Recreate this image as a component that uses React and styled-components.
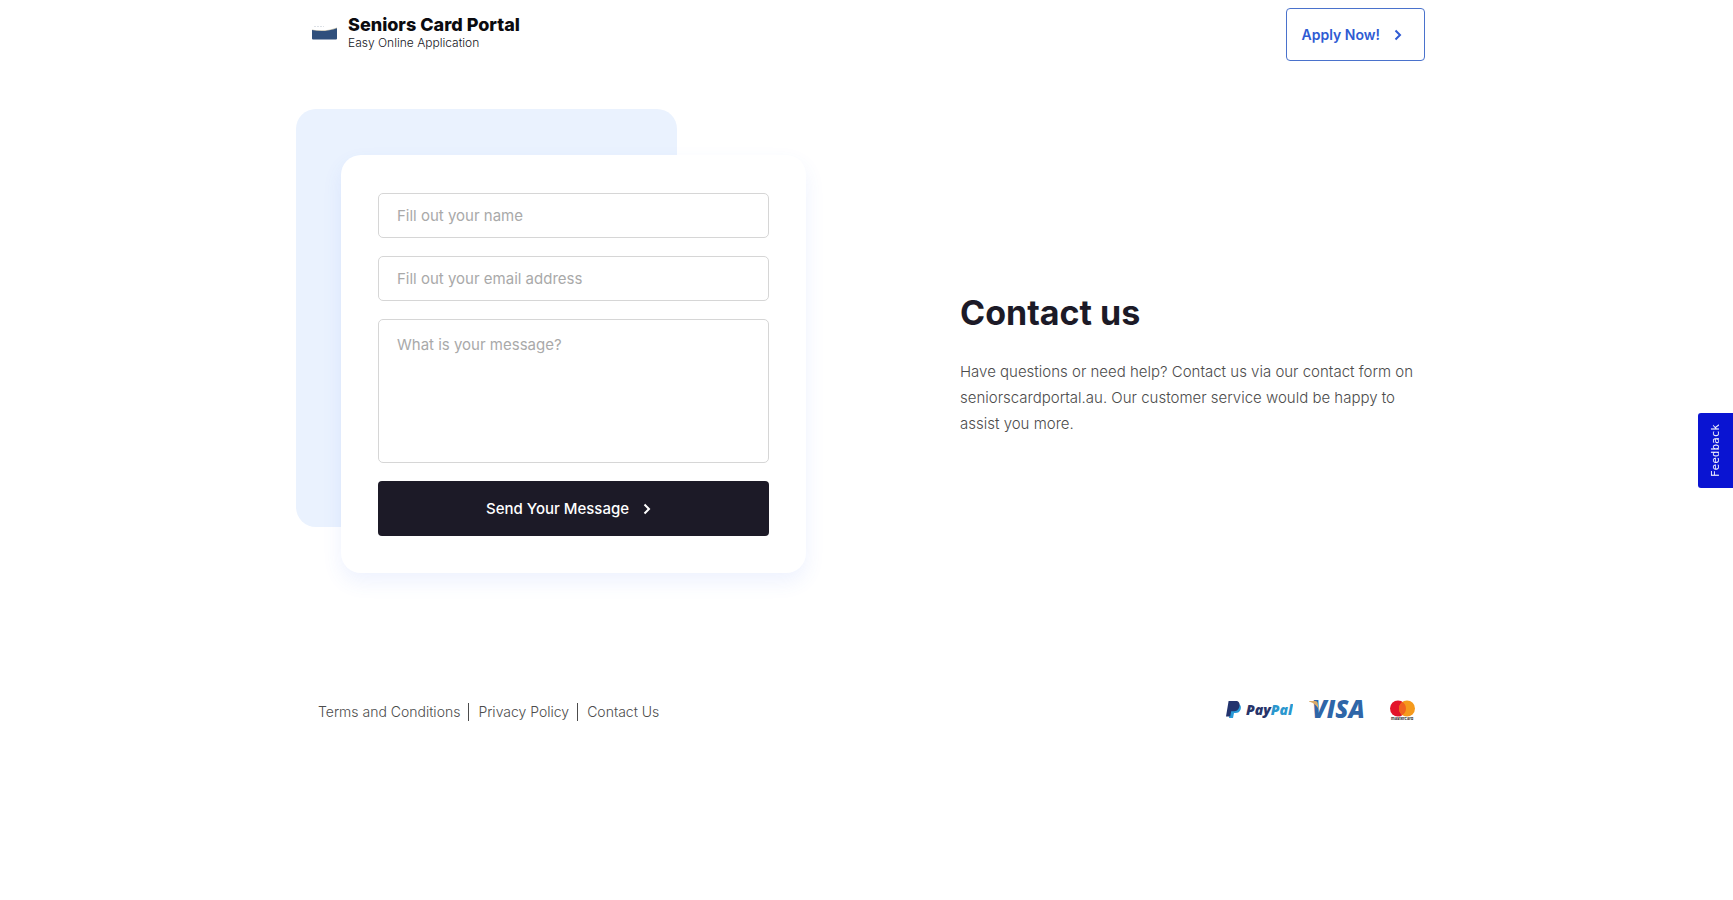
import React, { useState } from "react";
import styled, { createGlobalStyle } from "styled-components";

const App = () => {
  const [form, setForm] = useState({ name: "", email: "", message: "" });

  const handleChange = (e) => {
    setForm({ ...form, [e.target.name]: e.target.value });
  };

  return (
    <>
      <GlobalStyle />
      <Header>
        <Brand href="#home">
          <CardLogo />
          <div>
            <BrandName>Seniors Card Portal</BrandName>
            <BrandTagline>Easy Online Application</BrandTagline>
          </div>
        </Brand>
        <ApplyLink href="#apply">
          Apply Now!
          <Chevron />
        </ApplyLink>
      </Header>

      <Main>
        <FormArea>
          <FormCard onSubmit={(e) => e.preventDefault()}>
            <Input
              type="text"
              name="name"
              aria-label="Name"
              placeholder="Fill out your name"
              value={form.name}
              onChange={handleChange}
            />
            <Input
              type="email"
              name="email"
              aria-label="Email address"
              placeholder="Fill out your email address"
              value={form.email}
              onChange={handleChange}
            />
            <Message
              name="message"
              aria-label="Message"
              placeholder="What is your message?"
              value={form.message}
              onChange={handleChange}
            />
            <SubmitButton type="submit">
              Send Your Message
              <Chevron />
            </SubmitButton>
          </FormCard>
        </FormArea>
        <Intro>
          <h1>Contact us</h1>
          <p>
            Have questions or need help? Contact us via our contact form on
            seniorscardportal.au. Our customer service would be happy to assist
            you more.
          </p>
        </Intro>
      </Main>

      <Footer>
        <FooterNav>
          <a href="#terms">Terms and Conditions</a>
          <a href="#privacy">Privacy Policy</a>
          <a href="#contact">Contact Us</a>
        </FooterNav>
        <Payments>
          <PayPal />
          <Visa />
          <Mastercard />
        </Payments>
      </Footer>

      <FeedbackButton type="button">Feedback</FeedbackButton>
    </>
  );
};

const CardLogo = () => (
  <svg width="25" height="15" viewBox="0 0 25 15" aria-hidden="true">
    <path d="M2 1.5h10" stroke="#dde1e6" strokeWidth="1" strokeDasharray="2 1" />
    <path d="M0 4.4C8 6.2 17 5.4 25 2.4V4C17 6.6 8 7 0 5.4z" fill="#c5c1ae" />
    <path
      d="M0 5C8 6.8 17 6.2 25 3.2V13.5Q25 14.5 24 14.5H1Q0 14.5 0 13.5z"
      fill="#2f4f7c"
    />
  </svg>
);

const Chevron = () => (
  <svg width="8" height="12" viewBox="0 0 8 12" fill="none" aria-hidden="true">
    <path d="M1.5 1.5L6 6l-4.500 4.500" stroke="currentColor" strokeWidth="2" />
  </svg>
);

const PayPal = () => (
  <svg width="67" height="22" viewBox="0 0 67 22" role="img" aria-label="PayPal">
    <path
      d="M5.500 5H11.500C14.500 5 15.500 7.500 14.600 10.500C13.800 13 12 14 9.500 14H8L7 19H3z"
      fill="#2a9bd8"
    />
    <path
      d="M2.600 2H9.500C12.800 2 14.200 4 13.400 7.500C12.600 11 10.500 12.200 7.500 12.200H5.200L4.200 17.500H0z"
      fill="#23346e"
    />
    <text x="20" y="16" fontFamily="Open Sans, sans-serif" fontSize="14" fontWeight="800" fontStyle="italic">
      <tspan fill="#27346a">Pay</tspan>
      <tspan fill="#2a97ce">Pal</tspan>
    </text>
  </svg>
);

const Visa = () => (
  <svg width="60" height="36" viewBox="0 -7 60 36" role="img" aria-label="VISA">
    <text
      x="3"
      y="19"
      fontFamily="Open Sans, sans-serif"
      fontSize="24"
      fontWeight="800"
      fontStyle="italic"
      fill="#2f66a8"
    >
      VISA
    </text>
    <path d="M0 2H6.500Q8 2 8.500 3.500L10 11Q7 4.500 0 2.600z" fill="#d9ab68" />
  </svg>
);

const Mastercard = () => (
  <svg width="25" height="22" viewBox="0 0 25 22" role="img" aria-label="mastercard">
    <circle cx="8" cy="9.500" r="8" fill="#e3142a" />
    <circle cx="17" cy="9.500" r="8" fill="#f59a1c" />
    <path d="M12.500 2.900a8 8 0 0 1 0 13.200a8 8 0 0 1 0-13.200z" fill="#f1621f" />
    <text x="1" y="21" fontFamily="Inter, sans-serif" fontSize="4" fontWeight="700" fill="#2b2b2b">
      mastercard
    </text>
  </svg>
);

const GlobalStyle = createGlobalStyle`
  *,
  *::before,
  *::after {
    box-sizing: border-box;
  }

  body {
    margin: 0;
    background-color: #fff;
    color: #4c4c4c;
    font-family: Inter, "Liberation Sans", sans-serif;
    font-weight: 300;
  }

  a {
    color: inherit;
    text-decoration: none;
  }
`;

const Container = styled.div`
  width: 100%;
  max-width: 1141px;
  margin: 0 auto;
`;

const Header = styled(Container).attrs({ as: "header" })`
  display: flex;
  justify-content: space-between;
  align-items: flex-start;
  padding: 8px 12px 0 16px;
`;

const Brand = styled.a`
  display: flex;
  align-items: center;
  gap: 11px;
  padding-top: 6px;
`;

const BrandName = styled.div`
  color: #0b0b0f;
  font-size: 18px;
  font-weight: 800;
  line-height: 22px;
`;

const BrandTagline = styled.div`
  color: #15151c;
  font-size: 12px;
  line-height: 14px;
`;

const ApplyLink = styled.a`
  display: flex;
  align-items: center;
  gap: 14px;
  height: 53px;
  padding: 0 22px 0 15px;
  border: 1px solid #4a72cc;
  border-radius: 4px;
  color: #2f5bd3;
  font-size: 14px;
  font-weight: 600;
`;

const Main = styled(Container).attrs({ as: "main" })`
  display: grid;
  grid-template-columns: 510px 1fr;
  gap: 154px;
  align-items: center;
  padding-top: 48px;

  @media (max-width: 1000px) {
    grid-template-columns: 1fr;
    gap: 48px;
  }
`;

/* pale panel peeking out from behind the form card */
const FormArea = styled.div`
  position: relative;
  padding: 46px 0 0 45px;

  &::before {
    content: "";
    position: absolute;
    top: 0;
    left: 0;
    width: 381px;
    height: 418px;
    border-radius: 20px;
    background-color: #eaf2fe;
  }
`;

const FormCard = styled.form`
  position: relative;
  display: flex;
  flex-direction: column;
  gap: 18px;
  padding: 38px 37px 37px;
  border-radius: 20px;
  background-color: #fff;
  box-shadow: 0 9px 20px rgba(64, 112, 244, 0.09);
`;

const Input = styled.input`
  width: 100%;
  height: 45px;
  padding: 0 18px;
  border: 1px solid #d6d6d6;
  border-radius: 5px;
  background-color: #fff;
  color: #1c1a27;
  font-family: inherit;
  font-size: 15px;
  outline: none;

  &::placeholder {
    color: #a9a9a9;
    opacity: 1;
  }

  &:focus {
    border-color: #2f5bd3;
  }
`;

const Message = styled(Input).attrs({ as: "textarea" })`
  display: block;
  height: 144px;
  padding: 14px 18px;
  line-height: 22px;
  resize: none;
`;

const SubmitButton = styled.button`
  display: flex;
  justify-content: center;
  align-items: center;
  gap: 14px;
  height: 55px;
  padding: 0 10px 0 0;
  border: none;
  border-radius: 4px;
  background-color: #1c1a27;
  color: #fff;
  font-family: inherit;
  font-size: 15px;
  font-weight: 500;
  cursor: pointer;
`;

const Intro = styled.section`
  padding-top: 46px;

  h1 {
    margin: 0 0 24px;
    color: #1c1a27;
    font-size: 34px;
    font-weight: 700;
    line-height: 44px;
  }

  p {
    margin: 0;
    font-size: 15px;
    line-height: 26px;
  }
`;

const Footer = styled(Container).attrs({ as: "footer" })`
  display: flex;
  justify-content: space-between;
  align-items: center;
  padding: 119px 22px 40px;
`;

const FooterNav = styled.nav`
  display: flex;
  padding-top: 4px;

  a {
    padding-right: 8px;
    font-size: 14px;
    line-height: 18px;
  }

  a + a {
    padding-left: 9px;
    border-left: 1px solid #4c4c4c;
  }
`;

const Payments = styled.div`
  display: flex;
  align-items: center;
  gap: 16px;

  svg:last-child {
    margin-left: 5px;
  }
`;

const FeedbackButton = styled.button`
  position: fixed;
  top: 413px;
  right: 0;
  width: 35px;
  height: 75px;
  padding: 0;
  border: none;
  border-radius: 0 3px 3px 0;
  background-color: #0a14d2;
  color: #fff;
  font-family: "DejaVu Sans Mono", monospace;
  font-size: 11px;
  writing-mode: vertical-rl;
  rotate: 180deg;
  cursor: pointer;
`;

export default App;
